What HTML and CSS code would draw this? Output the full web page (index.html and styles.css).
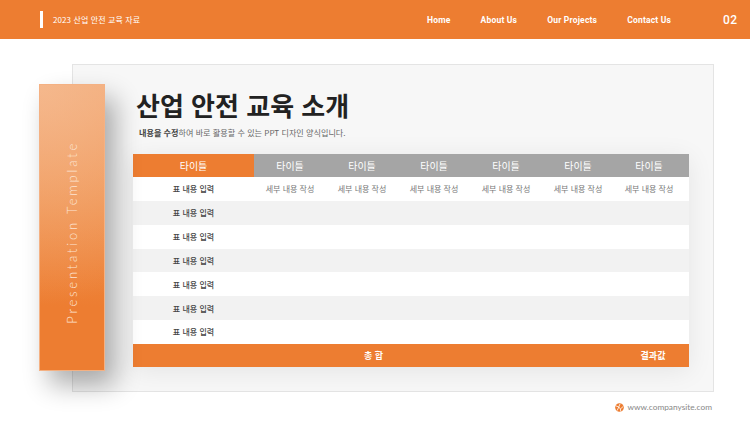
FILE: index.html
```html
<!DOCTYPE html>
<html lang="ko">
<head>
    <meta charset="UTF-8">
    <meta name="viewport" content="width=device-width, initial-scale=1.0">
    <title>산업 안전 교육 소개</title>
    <link rel="stylesheet" href="styles.css">
</head>
<body>
    <header class="topbar">
        <div class="topbar-title">
            <span class="topbar-mark"></span>
            <span>2023 산업 안전 교육 자료</span>
        </div>
        <nav class="topbar-nav">
            <a>Home</a>
            <a>About Us</a>
            <a>Our Projects</a>
            <a>Contact Us</a>
        </nav>
        <div class="page-num">02</div>
    </header>

    <main class="panel">
        <aside class="side-card"><span>Presentation Template</span></aside>
        <h1>산업 안전 교육 소개</h1>
        <p class="lead"><b>내용을 수정</b>하여 바로 활용할 수 있는 PPT 디자인 양식입니다.</p>
        <table class="data-table">
            <thead>
                <tr>
                    <th class="first">타이틀</th>
                    <th>타이틀</th>
                    <th>타이틀</th>
                    <th>타이틀</th>
                    <th>타이틀</th>
                    <th>타이틀</th>
                    <th class="last">타이틀</th>
                </tr>
            </thead>
            <tbody>
                <tr>
                    <td class="row-name">표 내용 입력</td>
                    <td>세부 내용 작성</td>
                    <td>세부 내용 작성</td>
                    <td>세부 내용 작성</td>
                    <td>세부 내용 작성</td>
                    <td>세부 내용 작성</td>
                    <td class="last">세부 내용 작성</td>
                </tr>
                <tr><td class="row-name">표 내용 입력</td><td colspan="6"></td></tr>
                <tr><td class="row-name">표 내용 입력</td><td colspan="6"></td></tr>
                <tr><td class="row-name">표 내용 입력</td><td colspan="6"></td></tr>
                <tr><td class="row-name">표 내용 입력</td><td colspan="6"></td></tr>
                <tr><td class="row-name">표 내용 입력</td><td colspan="6"></td></tr>
                <tr><td class="row-name">표 내용 입력</td><td colspan="6"></td></tr>
            </tbody>
            <tfoot>
                <tr>
                    <td colspan="6">총 합</td>
                    <td class="result">결과값</td>
                </tr>
            </tfoot>
        </table>
    </main>

    <footer class="site">
        <svg class="site-icon" width="9" height="9" viewBox="0 0 10 10">
            <circle cx="5" cy="5" r="4.8" fill="#ed7d31"/>
            <path d="M1 3.2L4.2 4.4M5.6 1L4.2 4.4L6 6.6M9 4L6 6.6L6.4 9.4M4.2 4.4L2.4 8.4" stroke="#fff" stroke-width="0.9" fill="none"/>
        </svg>
        <span>www.companysite.com</span>
    </footer>
</body>
</html>
```

FILE: styles.css
```css
html, body {
    margin: 0;
    padding: 0;
}
body {
    width: 750px;
    height: 422px;
    overflow: hidden;
    background-color: #fff;
    font-family: "Noto Sans CJK KR", "Noto Sans", sans-serif;
    color: #333;
}

/* top bar */
.topbar {
    height: 39px;
    background-color: #ed7d31;
    color: #fff;
    display: flex;
    align-items: center;
    padding: 0 0 0 40px;
}
.topbar-title {
    display: flex;
    align-items: center;
    gap: 10px;
    font-size: 8px;
    letter-spacing: 0.1px;
    width: 387px;
}
.topbar-mark {
    width: 3px;
    height: 17px;
    background-color: #fff;
}
.topbar-nav {
    display: flex;
    font-family: Roboto, "Noto Sans", sans-serif;
    font-size: 8.5px;
    font-weight: 700;
    letter-spacing: 0.2px;
    gap: 30px;
    width: 296px;
}
.page-num {
    font-family: Roboto, "Noto Sans", sans-serif;
    font-size: 12px;
    font-weight: 500;
    letter-spacing: 0.4px;
}

/* main panel */
.panel {
    position: relative;
    box-sizing: border-box;
    width: 642px;
    height: 328px;
    margin: 25px 0 0 72px;
    padding: 21px 25px 0 60px;
    background-color: #f7f7f7;
    border: 1px solid #e4e4e4;
}
.side-card {
    position: absolute;
    left: -34px;
    top: 19px;
    box-sizing: border-box;
    width: 66px;
    height: 287px;
    padding-top: 10px;
    border: 1px solid #f4b183;
    background:
        radial-gradient(circle at 0 0, rgba(246, 190, 150, 0.75), rgba(246, 190, 150, 0) 75%),
        linear-gradient(180deg, #f1a56f 0%, #ef914d 40%, #ed7d31 78%);
    box-shadow: 10px 14px 26px rgba(0, 0, 0, 0.32);
    display: flex;
    align-items: center;
    justify-content: center;
}
.side-card span {
    writing-mode: vertical-rl;
    transform: rotate(180deg);
    font-family: Lato, "Noto Sans", sans-serif;
    font-size: 13px;
    font-weight: 300;
    letter-spacing: 2.8px;
    color: #fde4d2;
    white-space: nowrap;
}
h1 {
    margin: 0 0 0 3px;
    font-size: 26px;
    line-height: 38px;
    font-weight: 700;
    color: #222;
}
.lead {
    margin: 2px 0 0 6px;
    font-size: 8.1px;
    line-height: 14px;
    color: #666;
}
.lead b {
    color: #444;
}

/* table */
.data-table {
    width: 556px;
    margin-top: 14px;
    border-collapse: collapse;
    table-layout: fixed;
    background-color: #fff;
    box-shadow: 0 4px 24px rgba(0, 0, 0, 0.08);
    text-align: center;
}
.data-table th {
    width: 72px;
    height: 23px;
    padding: 0;
    background-color: #a5a5a5;
    color: #fff;
    font-size: 10px;
    font-weight: 400;
}
.data-table th.first {
    width: 121px;
    background-color: #ed7d31;
}
.data-table th.last {
    width: 75px;
    padding-right: 5px;
    box-sizing: border-box;
}
.data-table td {
    height: 23.85px;
    padding: 0;
    font-size: 8px;
    color: #777;
}
.data-table td.last {
    padding-right: 5px;
}
.data-table tbody tr:nth-child(even) td {
    background-color: #f2f2f2;
}
.data-table td.row-name {
    color: #444;
    font-weight: 500;
}
.data-table tfoot td {
    height: 23px;
    background-color: #ed7d31;
    color: #fff;
    font-size: 9px;
    font-weight: 700;
}
.data-table tfoot td.result {
    padding-left: 3px;
}

/* footer */
.site {
    display: flex;
    align-items: center;
    justify-content: flex-end;
    gap: 3px;
    width: 712px;
    margin-top: 10px;
    font-family: Lato, "Noto Sans", sans-serif;
    font-size: 8.3px;
    color: #888;
}
```
